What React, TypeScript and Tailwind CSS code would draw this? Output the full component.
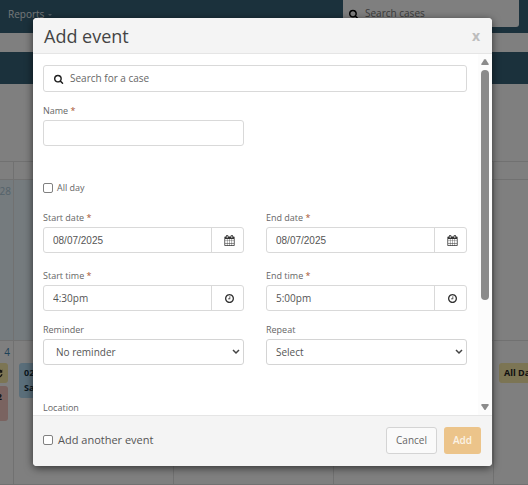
import React from 'react'
import clsx from 'clsx'

type IconProps = {
  className?: string
}

function SearchIcon({ className }: IconProps) {
  return (
    <svg viewBox="0 0 1792 1792" fill="currentColor" className={className} aria-hidden="true">
      <path d="M1152 832q0-185-131.5-316.5t-316.5-131.5-316.5 131.5-131.5 316.5 131.5 316.5 316.5 131.5 316.5-131.5 131.5-316.5zm512 832q0 52-38 90t-90 38q-54 0-90-38l-343-342q-179 124-399 124-143 0-273.5-55.5t-225-150-150-225-55.5-273.5 55.5-273.5 150-225 225-150 273.5-55.5 273.5 55.5 225 150 150 225 55.5 273.5q0 220-124 399l343 343q37 37 37 90z" />
    </svg>
  )
}

function ClockIcon({ className }: IconProps) {
  return (
    <svg viewBox="128 128 1536 1536" fill="currentColor" className={className} aria-hidden="true">
      <path d="M1024 544v448q0 14-9 23t-23 9h-320q-14 0-23-9t-9-23v-64q0-14 9-23t23-9h224v-352q0-14 9-23t23-9h64q14 0 23 9t9 23zm416 352q0-148-73-273t-198-198-273-73-273 73-198 198-73 273 73 273 198 198 273 73 273-73 198-198 73-273zm224 0q0 209-103 385.5t-279.5 279.5-385.5 103-385.5-103-279.5-279.5-103-385.5 103-385.5 279.5-279.5 385.5-103 385.5 103 279.5 279.5 103 385.5z" />
    </svg>
  )
}

function CalendarIcon({ className }: IconProps) {
  return (
    <svg viewBox="0 0 1792 1792" fill="currentColor" className={className} aria-hidden="true">
      <path d="M192 1664h288v-288h-288v288zm352 0h320v-288h-320v288zm-352-352h288v-320h-288v320zm352 0h320v-320h-320v320zm-352-384h288v-288h-288v288zm736 736h320v-288h-320v288zm-384-736h320v-288h-320v288zm768 736h288v-288h-288v288zm-384-352h320v-320h-320v320zm-352-864v-288q0-13-9.5-22.5t-22.5-9.5h-64q-13 0-22.5 9.5t-9.5 22.5v288q0 13 9.5 22.5t22.5 9.5h64q13 0 22.5-9.5t9.5-22.5zm736 864h288v-320h-288v320zm-384-384h320v-288h-320v288zm384 0h288v-288h-288v288zm32-480v-288q0-13-9.5-22.5t-22.5-9.5h-64q-13 0-22.5 9.5t-9.5 22.5v288q0 13 9.5 22.5t22.5 9.5h64q13 0 22.5-9.5t9.5-22.5zm384-64v1280q0 52-38 90t-90 38h-1408q-52 0-90-38t-38-90v-1280q0-52 38-90t90-38h128v-96q0-66 47-113t113-47h64q66 0 113 47t47 113v96h384v-96q0-66 47-113t113-47h64q66 0 113 47t47 113v96h128q52 0 90 38t38 90z" />
    </svg>
  )
}

function RepeatIcon({ className }: IconProps) {
  return (
    <svg viewBox="0 0 12 12" fill="none" stroke="currentColor" strokeWidth="2" className={className} aria-hidden="true">
      <path d="M1.5 5A4.5 4.5 0 0 1 9.5 3M10.5 7a4.5 4.5 0 0 1-8 2" />
      <path d="M11 .5V5H6.500zM1 11.500V7h4.500z" fill="currentColor" stroke="none" />
    </svg>
  )
}

type FieldProps = {
  id: string
  label: string
  required?: boolean
  children: React.ReactNode
}

function Field({ id, label, required, children }: FieldProps) {
  return (
    <div className="flex min-w-0 flex-col">
      <label htmlFor={id} className="text-[9px] leading-[18px] text-[#666]">
        {label}
        {required && <span className="text-[#a8522f]"> *</span>}
      </label>
      {children}
    </div>
  )
}

type PickerProps = {
  id: string
  value: string
  icon: 'calendar' | 'clock'
}

function Picker({ id, value, icon }: PickerProps) {
  return (
    <div className="flex h-[26px] rounded-[3px] border border-[#d9d9d9] bg-white">
      <input
        id={id}
        type="text"
        defaultValue={value}
        className={clsx(
          'min-w-0 flex-1 px-[9px] text-[10px] text-[#555] outline-none',
          icon === 'calendar' && 'font-["Liberation_Sans",sans-serif]'
        )}
      />
      <button
        type="button"
        aria-label={icon === 'calendar' ? 'Open calendar' : 'Choose time'}
        className="flex w-8 items-center justify-center border-l border-[#d9d9d9] pl-1 text-[#333]"
      >
        {icon === 'calendar' ? <CalendarIcon className="size-[11px]" /> : <ClockIcon className="size-[9px]" />}
      </button>
    </div>
  )
}

type SelectProps = {
  id: string
  value: string
  className?: string
}

function Select({ id, value, className }: SelectProps) {
  return (
    <div className="relative">
      <select
        id={id}
        defaultValue={value}
        className={clsx(
          'block h-[26px] w-full appearance-none rounded-[3px] border border-[#d4d4d4] bg-white text-[#555] outline-none',
          className
        )}
      >
        <option>{value}</option>
      </select>
      <svg
        viewBox="0 0 8 6"
        fill="none"
        stroke="#444"
        strokeWidth="1.5"
        className="pointer-events-none absolute top-[10px] right-1 h-[6px] w-2"
        aria-hidden="true"
      >
        <path d="M1 1l3 3 3-3" />
      </svg>
    </div>
  )
}

function Checkbox({ id }: { id: string }) {
  return (
    <input
      id={id}
      type="checkbox"
      className="size-[10px] shrink-0 appearance-none rounded-[2px] border border-[#808080] bg-white checked:bg-[#36627a]"
    />
  )
}

const columns = 'grid grid-cols-[14px_160px_160px_160px_1fr]'
const cell = 'border-r border-[#e2e2e2]'

// Month view behind the dialog
function CalendarPage() {
  return (
    <div className="flex min-h-screen flex-col overflow-hidden bg-white">
      <header className="flex h-[33px] items-start justify-between bg-[#366278] pl-2 pr-[9px]">
        <button type="button" className="flex h-7 items-center gap-1 text-[10px] text-[#e6eef2]">
          Reports
          <span className="mt-0.5 border-x-2 border-t-2 border-x-transparent border-t-[#9fb5c0]" />
        </button>
        <label className="flex h-[27px] w-[176px] items-center gap-1.5 rounded-b-[3px] bg-white pl-1.5 text-black">
          <SearchIcon className="size-[10px]" />
          <input
            type="search"
            aria-label="Search cases"
            placeholder="Search cases"
            className="min-w-0 flex-1 text-[10px] outline-none placeholder:text-[#777]"
          />
        </label>
      </header>
      <div className="h-[19px] bg-white" />
      <div className="h-8 bg-[#366278]" />
      <main className="flex flex-1 flex-col">
        <div className="h-[78px] border-b border-[#e2e2e2]" />
        <div className={clsx(columns, 'h-[18px] border-b border-[#e2e2e2]')}>
          <div className={cell} />
          <div className={cell} />
          <div className={cell} />
          <div className={cell} />
          <div />
        </div>
        <div className={clsx(columns, 'h-[161px] border-b border-[#e2e2e2] text-[10px]')}>
          <div className={clsx(cell, 'flex justify-end bg-[#eaf6fc] pt-1 pr-0.5 text-[#a9c5d5]')}>28</div>
          <div className={clsx(cell, 'bg-[#eaf6fc]')} />
          <div className={cell} />
          <div className={cell} />
          <div />
        </div>
        <div className={clsx(columns, 'flex-1 border-b border-[#e2e2e2] text-[9px] font-bold text-[#222]')}>
          <div className={clsx(cell, 'flex min-w-0 flex-col overflow-hidden')}>
            <span className="h-[22px] pt-[3px] pr-[3px] text-right text-[10px] leading-4 font-normal text-[#3b84b0]">4</span>
            <span className="mr-[5px] flex h-5 items-center justify-end rounded-r-[3px] bg-[#f8eaa8] pr-[5px]">
              <RepeatIcon className="size-[9px] shrink-0" />
            </span>
            <span className="mt-[3px] mr-[5px] flex h-[35px] justify-end rounded-r-[3px] bg-[#f5c6c0] pt-1 pr-[6px]">2</span>
          </div>
          <div className={clsx(cell, 'pt-[22px] pr-1 pl-[5px]')}>
            <div className="h-[35px] rounded-[3px] bg-[#b4dcf5] px-[5px] pt-0.5 leading-[15px] text-[#16303e]">
              02:00 pm
              <br />
              Sarah
            </div>
          </div>
          <div className={cell} />
          <div className={cell} />
          <div className="min-w-0 overflow-hidden pt-[22px] pl-[5px]">
            <div className="flex h-5 w-[140px] items-center rounded-[3px] bg-[#f8eaa8] pl-[5px]">All Day</div>
          </div>
        </div>
      </main>
    </div>
  )
}

function Scrollbar() {
  return (
    <div className="flex w-3.5 shrink-0 flex-col items-center bg-[#fcfcfc] py-[5px]" aria-hidden="true">
      <svg viewBox="0 0 8 6" className="h-[6px] w-2" fill="#8b8b8b">
        <path d="M3.2.6a1 1 0 0 1 1.6 0L7.6 4.8Q8 6 7 6H1Q0 6 .4 4.8z" />
      </svg>
      <div className="mt-[5px] h-[230px] w-2 rounded-full bg-[#8b8b8b]" />
      <svg viewBox="0 0 8 6" className="mt-auto h-[6px] w-2" fill="#8b8b8b">
        <path d="M3.2 5.4a1 1 0 0 0 1.6 0L7.6 1.2Q8 0 7 0H1Q0 0 .4 1.2z" />
      </svg>
    </div>
  )
}

function AddEventDialog() {
  return (
    <div
      role="dialog"
      aria-label="Add event"
      className="flex h-full flex-col overflow-hidden rounded-[4px] bg-white shadow-[0_2px_8px_rgba(0,0,0,0.6)]"
    >
      <header className="flex h-9 shrink-0 items-center justify-between border-b border-[#e5e5e5] bg-[#f4f4f4] pr-3 pl-[11px]">
        <h1 className="text-[18px] leading-6 text-[#444]">Add event</h1>
        <button type="button" aria-label="Close" className="text-[14px] font-bold text-[#bdbdbd]">
          x
        </button>
      </header>

      <div className="flex min-h-0 flex-1">
        <form className="min-w-0 flex-1 overflow-hidden pt-[11px] pr-[11px] pl-[10px]">
          <label className="flex h-[27px] items-center gap-1.5 rounded-[3px] border border-[#d9d9d9] pl-2.5 text-[#222]">
            <SearchIcon className="size-[10px]" />
            <input
              type="search"
              aria-label="Search for a case"
              placeholder="Search for a case"
              className="min-w-0 flex-1 text-[10px] outline-none placeholder:text-[#666]"
            />
          </label>

          <div className="mt-2.5 grid grid-cols-2 gap-x-[22px]">
            <Field id="name" label="Name" required>
              <input
                id="name"
                type="text"
                className="h-[26px] rounded-[3px] border border-[#d9d9d9] px-2 text-[10px] outline-none"
              />
            </Field>
          </div>

          <div className="mt-[34px] flex h-4 items-center gap-1">
            <Checkbox id="all-day" />
            <label htmlFor="all-day" className="text-[9px] leading-4 text-[#666]">
              All day
            </label>
          </div>

          <div className="mt-[13px] grid grid-cols-2 gap-x-[22px] gap-y-3.5">
            <Field id="start-date" label="Start date" required>
              <Picker id="start-date" value="08/07/2025" icon="calendar" />
            </Field>
            <Field id="end-date" label="End date" required>
              <Picker id="end-date" value="08/07/2025" icon="calendar" />
            </Field>
            <Field id="start-time" label="Start time" required>
              <Picker id="start-time" value="4:30pm" icon="clock" />
            </Field>
            <Field id="end-time" label="End time" required>
              <Picker id="end-time" value="5:00pm" icon="clock" />
            </Field>
          </div>

          <div className="mt-2.5 grid grid-cols-2 gap-x-[22px]">
            <Field id="reminder" label="Reminder">
              <Select id="reminder" value="No reminder" className="px-3 text-[10px]" />
            </Field>
            <Field id="repeat" label="Repeat">
              <Select id="repeat" value="Select" className="px-[9px] text-[10px]" />
            </Field>
          </div>

          <div className="mt-[34px]">
            <Field id="location" label="Location">
              <input id="location" type="text" className="h-[26px] rounded-[3px] border border-[#d9d9d9] px-2" />
            </Field>
          </div>
        </form>
        <Scrollbar />
      </div>

      <footer className="flex h-[51px] shrink-0 items-center justify-between border-t border-[#e5e5e5] bg-[#f4f4f4] pr-[11px] pb-0.5 pl-[10px]">
        <div className="flex items-center gap-[5px]">
          <Checkbox id="add-another" />
          <label htmlFor="add-another" className="text-[11px] leading-4 text-[#555]">
            Add another event
          </label>
        </div>
        <div className="flex gap-[7px]">
          <button
            type="button"
            className="h-[27px] w-[51px] rounded-[3px] border border-[#d4d4d4] bg-[#fafafa] text-[10px] text-[#666]"
          >
            Cancel
          </button>
          <button type="submit" className="h-[27px] w-[37px] rounded-[3px] bg-[#ecc48a] text-[10px] font-semibold text-[#fbf3e6]">
            Add
          </button>
        </div>
      </footer>
    </div>
  )
}

export default function App() {
  return (
    <div className='relative h-screen overflow-hidden font-["Open_Sans",sans-serif]'>
      <CalendarPage />
      <div className="absolute inset-0 bg-black/50 pt-[18px] pr-9 pb-[19px] pl-[33px]">
        <AddEventDialog />
      </div>
    </div>
  )
}
